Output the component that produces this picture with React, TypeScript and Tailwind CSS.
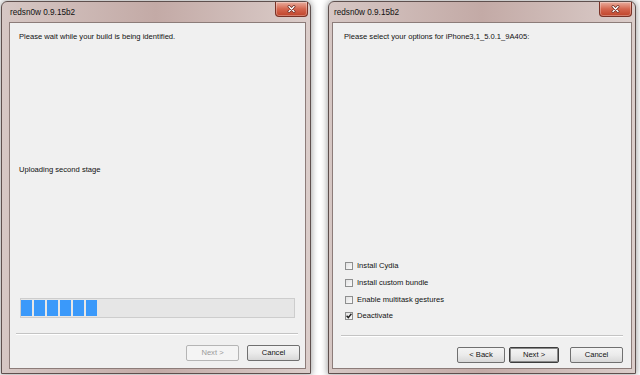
import React from "react";

const font = { fontFamily: '"Liberation Sans", Arial, sans-serif' };

const CloseButton: React.FC = () => (
  <div className="w-[33px] h-[15px] rounded-b-[4px] border border-t-0 border-[#7a3226] bg-gradient-to-b from-[#e8ad9e] via-[#d4664f] to-[#bf4329] flex items-center justify-center shadow-[inset_0_0_0_1px_rgba(255,255,255,0.3)]">
    <svg width="9" height="8" viewBox="0 0 9 8">
      <path d="M2 1.5 L7 6.5 M7 1.5 L2 6.5" stroke="#6a2a20" strokeWidth="2.8" strokeLinecap="round" />
      <path d="M2 1.5 L7 6.5 M7 1.5 L2 6.5" stroke="#ffffff" strokeWidth="1.4" strokeLinecap="round" />
    </svg>
  </div>
);

const Button: React.FC<{
  label: string;
  width: string;
  disabled?: boolean;
  isDefault?: boolean;
  className?: string;
}> = ({ label, width, disabled, isDefault, className = "" }) => {
  let look =
    "border-[#707070] bg-gradient-to-b from-[#f4f4f4] via-[#ebebeb] to-[#d8d8d8] text-[#111]";
  if (disabled) {
    look = "border-[#b5b5b5] bg-[#f4f4f4] text-[#9a9a9a]";
  }
  if (isDefault) {
    look =
      "border-[#3d3d3d] bg-gradient-to-b from-[#f4f4f4] via-[#ebebeb] to-[#d8d8d8] text-[#111] shadow-[inset_0_0_0_1px_#8a8a8a]";
  }
  return (
    <div
      className={`${width} h-[16px] rounded-[2px] border flex items-center justify-center text-[7.6px] leading-none ${look} ${className}`}
    >
      {label}
    </div>
  );
};

const Separator: React.FC<{ className?: string }> = ({ className = "" }) => (
  <div className={`flex flex-col ${className}`}>
    <div className="h-px bg-[#c4c4c4]" />
    <div className="h-px bg-white" />
  </div>
);

const Window: React.FC<{
  width: string;
  padX: string;
  titlePad: string;
  closeMargin: string;
  children: React.ReactNode;
}> = ({ width, padX, titlePad, closeMargin, children }) => (
  <div
    className={`${width} h-[373px] mt-[1px] rounded-t-[6px] border border-[#5f504e] bg-gradient-to-r from-[#d6c7c4] via-[#c3aaa6] to-[#dbcdca] shadow-[0_0_6px_1px_rgba(0,0,0,0.35)] flex flex-col ${padX} pb-[4px]`}
  >
    <div className={`h-[20px] flex items-start ${titlePad}`}>
      <span className="mt-[6px] text-[8.2px] leading-[10px] text-[#111]">
        redsn0w 0.9.15b2
      </span>
      <div className={`ml-auto ${closeMargin}`}>
        <CloseButton />
      </div>
    </div>
    <div className="flex-1 border border-[#8c7c79] bg-[#f0f0f0] flex flex-col text-[7.6px] leading-[10px] text-[#111]">
      {children}
    </div>
  </div>
);

const CheckRow: React.FC<{ label: string; checked?: boolean }> = ({ label, checked }) => (
  <div className="h-[16.7px] flex items-center">
    <div className="w-[8px] h-[8px] border border-[#8e8f8f] bg-gradient-to-br from-[#e2e2e2] to-[#fbfbfb] flex items-center justify-center">
      {checked && (
        <svg width="6" height="6" viewBox="0 0 6 6">
          <path d="M0.6 2.8 L2.3 4.6 L5.4 0.8" stroke="#1e1e1e" strokeWidth="1.4" fill="none" />
        </svg>
      )}
    </div>
    <span className="ml-[4px]">{label}</span>
  </div>
);

const options = [
  { label: "Install Cydia", checked: false },
  { label: "Install custom bundle", checked: false },
  { label: "Enable multitask gestures", checked: false },
  { label: "Deactivate", checked: true },
];

export default function App() {
  return (
    <div className="w-[640px] h-[375px] bg-white flex items-start overflow-hidden" style={font}>
      {/* Left dialog */}
      <div className="ml-[1px]">
        <Window width="w-[310px]" padX="pl-[7px] pr-[4px]" titlePad="pl-[1px]" closeMargin="mr-[-2px]">
          <div className="mt-[9px] pl-[9px]">Please wait while your build is being identified.</div>
          <div className="mt-[123px] pl-[9px]">Uploading second stage</div>
          <div className="mt-[123px] ml-[10px] w-[275px] h-[20px] border border-[#cdcdcd] bg-[#e6e6e6] py-[1px] flex gap-[2px]">
            {[0, 1, 2, 3, 4, 5].map((i) => (
              <div key={i} className="w-[11px] h-full bg-[#3a99fa]" />
            ))}
          </div>
          <Separator className="mt-[15px] ml-[6px] w-[282px]" />
          <div className="mt-[10px] flex justify-end pr-[5px]">
            <Button label="Next >" width="w-[53px]" disabled />
            <Button label="Cancel" width="w-[53px]" className="ml-[8px]" />
          </div>
        </Window>
      </div>

      {/* Right dialog */}
      <div className="ml-[17px]">
        <Window width="w-[308px]" padX="px-[3px]" titlePad="pl-[2px]" closeMargin="mr-[0px]">
          <div className="mt-[9px] pl-[11px]">
            Please select your options for iPhone3,1_5.0.1_9A405:
          </div>
          <div className="mt-[216px] pl-[12px] flex flex-col">
            {options.map((o) => (
              <CheckRow key={o.label} label={o.label} checked={o.checked} />
            ))}
          </div>
          <Separator className="mt-[10px] mx-[8px]" />
          <div className="mt-[10px] flex justify-end pr-[8px]">
            <Button label="< Back" width="w-[48px]" />
            <Button label="Next >" width="w-[50px]" isDefault className="ml-[4px]" />
            <Button label="Cancel" width="w-[53px]" className="ml-[11px]" />
          </div>
        </Window>
      </div>
    </div>
  );
}
